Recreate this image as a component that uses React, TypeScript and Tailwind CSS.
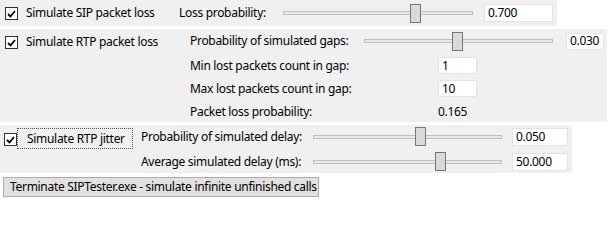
import React from "react";

const font = { fontFamily: '"Noto Sans", "Segoe UI", sans-serif' };

function Check() {
  return (
    <div className="w-[13px] h-[13px] border border-[#333333] bg-white flex items-center justify-center shrink-0">
      <svg width="9" height="8" viewBox="0 0 9 8">
        <path d="M1 4 L3.5 6.5 L8 1" stroke="#000" strokeWidth="1.8" fill="none" />
      </svg>
    </div>
  );
}

function Slider({ width, pos }: { width: number; pos: number }) {
  return (
    <div className="relative h-[19px] shrink-0 flex items-center" style={{ width }}>
      <div className="w-full h-[4px] border border-[#c0c0c0] bg-[#e7eaea]" />
      <div
        className="absolute top-0 w-[11px] h-[19px] border border-[#777777] bg-[#dadada]"
        style={{ left: pos }}
      />
    </div>
  );
}

function Box({ width, value, h = 18 }: { width: number; value: string; h?: number }) {
  return (
    <div
      className="bg-white border border-[#e3e3e3] flex items-center pl-[3px] text-[12px] text-black shrink-0"
      style={{ width, height: h }}
    >
      {value}
    </div>
  );
}

export default function App() {
  return (
    <div className="w-[613px] h-[204px] bg-white text-[12px] tracking-[-0.3px] text-black leading-none whitespace-nowrap" style={font}>
      {/* SIP packet loss */}
      <div className="w-[557px] h-[26px] bg-[#f0f0f0] flex items-center">
        <div className="ml-[5px] mt-[1px]"><Check /></div>
        <span className="ml-[8px] w-[153px]">Simulate SIP packet loss</span>
        <span className="w-[104px]">Loss probability:</span>
        <Slider width={190} pos={127} />
        <div className="ml-[11px]"><Box width={69} value="0.700" /></div>
      </div>

      {/* RTP packet loss */}
      <div className="mt-[3px] w-[607px] h-[93px] bg-[#f0f0f0] flex">
        <div className="w-[190px] flex items-start pt-[7px]">
          <div className="ml-[5px]"><Check /></div>
          <span className="ml-[8px] mt-[0px]">Simulate RTP packet loss</span>
        </div>
        <div className="flex flex-col pt-[3px]">
          <div className="flex items-center h-[18px]">
            <span className="w-[174px]">Probability of simulated gaps:</span>
            <Slider width={189} pos={88} />
            <div className="ml-[13px]"><Box width={38} value="0.030" h={17} /></div>
          </div>
          <div className="flex items-center h-[17px] mt-[7px]">
            <span className="w-[248px]">Min lost packets count in gap:</span>
            <Box width={39} value="1" h={17} />
          </div>
          <div className="flex items-center h-[17px] mt-[6px]">
            <span className="w-[248px]">Max lost packets count in gap:</span>
            <Box width={39} value="10" h={17} />
          </div>
          <div className="flex items-center h-[16px] mt-[7px]">
            <span className="w-[248px]">Packet loss probability:</span>
            <span>0.165</span>
          </div>
        </div>
      </div>

      {/* RTP jitter */}
      <div className="mt-[3px] w-[572px] h-[48px] bg-[#f0f0f0] flex">
        <div className="w-[141px] flex items-start pt-[3px]">
          <div className="ml-[4px] mt-[5px]"><Check /></div>
          <div className="h-[21px] w-[116px] border border-dotted border-[#555] flex items-center pl-[9px]">
            Simulate RTP jitter
          </div>
        </div>
        <div className="flex flex-col pt-[2px]">
          <div className="flex items-center h-[19px]">
            <span className="w-[172px]">Probability of simulated delay:</span>
            <Slider width={189} pos={102} />
            <div className="ml-[10px]"><Box width={56} value="0.050" /></div>
          </div>
          <div className="flex items-center h-[19px] mt-[6px]">
            <span className="w-[172px]">Average simulated delay (ms):</span>
            <Slider width={189} pos={122} />
            <div className="ml-[10px]"><Box width={56} value="50.000" /></div>
          </div>
        </div>
      </div>

      {/* Button */}
      <div className="mt-[4px] ml-[3px] w-[316px] h-[20px] bg-[#e1e1e1] border border-[#adadad] flex items-center pl-[6px]">
        Terminate SIPTester.exe - simulate infinite unfinished calls
      </div>
    </div>
  );
}
